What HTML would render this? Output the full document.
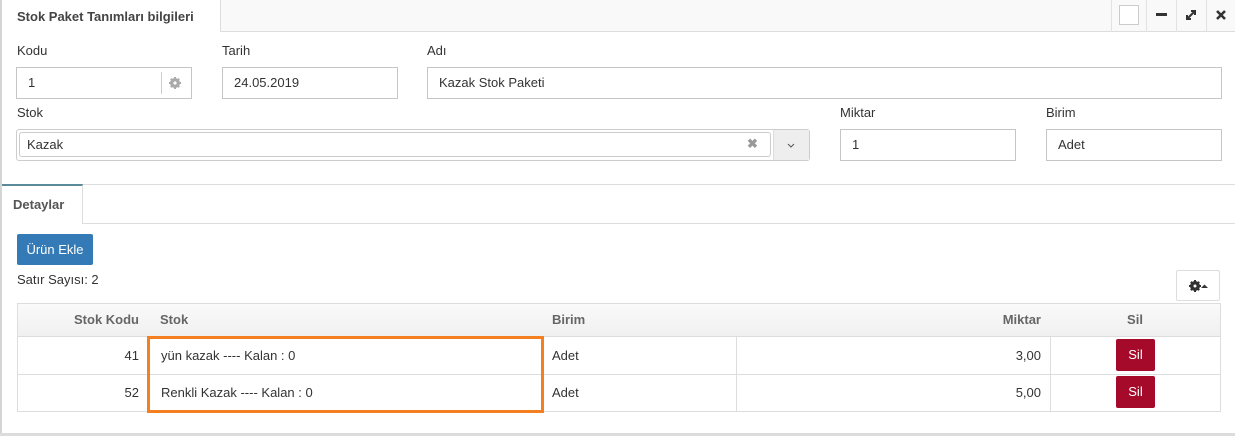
<!DOCTYPE html>
<html><head><meta charset="utf-8"><style>
*{box-sizing:border-box;margin:0;padding:0}
body{width:1235px;height:436px;overflow:hidden;background:#fff;font-family:"Liberation Sans",sans-serif;font-size:13px;color:#333;position:relative}
.a{position:absolute}
.inp{position:absolute;border:1px solid #c5c5c5;background:#fff;padding-left:11px;line-height:30px;height:32px;color:#333}
.lbl{position:absolute;font-size:13px;color:#333}
.th{position:absolute;font-weight:bold;color:#666;top:303px;line-height:34px}
.td{position:absolute;line-height:37px}
.sil{position:absolute;left:1116px;width:39px;height:32px;background:#a50a2a;color:#fff;border-radius:2px;text-align:center;line-height:32px}
</style></head><body>
<div class="a" style="left:0;top:0;width:2px;height:436px;background:#d5d5d5"></div>
<div class="a" style="left:0;top:433px;width:1235px;height:3px;background:#dcdcdc"></div>
<div class="a" style="left:220px;top:0;width:1015px;height:32px;background:#f9f9f9;border-left:1px solid #ddd;border-bottom:1px solid #ddd"></div>
<div class="a" style="left:17px;top:9px;font-weight:bold;color:#444">Stok Paket Tanımları bilgileri</div>
<div class="a" style="left:1111px;top:0;width:1px;height:32px;background:#e2e2e2"></div>
<div class="a" style="left:1146px;top:0;width:1px;height:32px;background:#e2e2e2"></div>
<div class="a" style="left:1176px;top:0;width:1px;height:32px;background:#e2e2e2"></div>
<div class="a" style="left:1206px;top:0;width:1px;height:32px;background:#e2e2e2"></div>
<div class="a" style="left:1119px;top:5px;width:20px;height:20px;border:1px solid #ccc;background:#fff"></div>
<div class="a" style="left:1156px;top:13px;width:11px;height:3px;background:#333"></div>
<svg class="a" style="left:1184px;top:8px" width="14" height="14" viewBox="0 0 14 14"><path d="M3 11L11 3M7 3h4v4M3 7v4h4" stroke="#333" stroke-width="2" fill="none"/></svg>
<svg class="a" style="left:1216px;top:10px" width="10" height="10" viewBox="0 0 10 10"><path d="M1 1L9 9M9 1L1 9" stroke="#333" stroke-width="2.6"/></svg>

<div class="lbl" style="left:17px;top:43px">Kodu</div>
<div class="lbl" style="left:222px;top:43px">Tarih</div>
<div class="lbl" style="left:427px;top:43px">Adı</div>
<div class="inp" style="left:16px;top:67px;width:176px">1</div>
<div class="a" style="left:161px;top:72px;width:1px;height:22px;background:#ccc"></div>
<svg class="a" style="left:169px;top:77px" width="12" height="12" viewBox="0 0 12 12"><circle cx="6" cy="6" r="3.5" fill="none" stroke="#aaa" stroke-width="3"/><path d="M6 0v12M0 6h12M1.8 1.8l8.4 8.4M10.2 1.8l-8.4 8.4" stroke="#aaa" stroke-width="2"/><circle cx="6" cy="6" r="1.6" fill="#fff"/></svg>
<div class="inp" style="left:222px;top:67px;width:176px">24.05.2019</div>
<div class="inp" style="left:427px;top:67px;width:795px">Kazak Stok Paketi</div>

<div class="lbl" style="left:17px;top:105px">Stok</div>
<div class="lbl" style="left:840px;top:105px">Miktar</div>
<div class="lbl" style="left:1046px;top:105px">Birim</div>
<div class="a" style="left:16px;top:129px;width:794px;height:32px;border:1px solid #ccc;border-radius:3px;background:#fff"></div>
<div class="a" style="left:19px;top:132px;width:752px;height:25px;border:1px solid #ccc;border-radius:3px;padding-left:7px;line-height:24px;color:#333">Kazak</div>
<div class="a" style="left:747px;top:136px;color:#999;font-weight:bold;font-size:13px">✖</div>
<div class="a" style="left:773px;top:130px;width:36px;height:30px;background:#eee;border-left:1px solid #ddd"></div>
<svg class="a" style="left:787px;top:143px" width="8" height="6"><path d="M1 1l3 3 3-3" stroke="#555" fill="none"/></svg>
<div class="inp" style="left:840px;top:129px;width:176px">1</div>
<div class="inp" style="left:1046px;top:129px;width:176px">Adet</div>

<div class="a" style="left:2px;top:184px;width:1233px;height:1px;background:#ddd"></div>
<div class="a" style="left:2px;top:223px;width:1233px;height:1px;background:#ddd"></div>
<div class="a" style="left:2px;top:184px;width:81px;height:40px;background:#fff;border-top:2px solid #5b8a9a;border-right:1px solid #ddd"></div>
<div class="a" style="left:13px;top:197px;font-weight:bold;color:#555">Detaylar</div>

<div class="a" style="left:17px;top:234px;width:76px;height:31px;background:#337ab7;border-radius:2px;color:#fff;text-align:center;line-height:31px">Ürün Ekle</div>
<div class="a" style="left:17px;top:272px">Satır Sayısı: 2</div>
<div class="a" style="left:1176px;top:270px;width:44px;height:31px;border:1px solid #ddd;border-radius:2px;background:#fff"></div>
<svg class="a" style="left:1189px;top:280px" width="12" height="12" viewBox="0 0 12 12"><circle cx="6" cy="6" r="3.5" fill="none" stroke="#333" stroke-width="3"/><path d="M6 0v12M0 6h12M1.8 1.8l8.4 8.4M10.2 1.8l-8.4 8.4" stroke="#333" stroke-width="2"/><circle cx="6" cy="6" r="1.5" fill="#fff"/></svg>
<svg class="a" style="left:1201px;top:284px" width="7" height="5"><path d="M0 4L3.5 0.5 7 4z" fill="#333"/></svg>

<div class="a" style="left:17px;top:303px;width:1204px;height:109px;border:1px solid #ddd"></div>
<div class="a" style="left:18px;top:304px;width:1202px;height:33px;background:linear-gradient(#fafafa,#f0f0f0);border-bottom:1px solid #ddd"></div>
<div class="a" style="left:18px;top:374px;width:1202px;height:1px;background:#ddd"></div>
<div class="a" style="left:736px;top:337px;width:1px;height:75px;background:#ddd"></div>
<div class="a" style="left:1050px;top:337px;width:1px;height:75px;background:#ddd"></div>
<div class="th" style="left:17px;width:122px;text-align:right">Stok Kodu</div>
<div class="th" style="left:160px">Stok</div>
<div class="th" style="left:552px">Birim</div>
<div class="th" style="left:736px;width:305px;text-align:right">Miktar</div>
<div class="th" style="left:1050px;width:170px;text-align:center">Sil</div>

<div class="td" style="left:17px;top:337px;width:122px;text-align:right">41</div>
<div class="td" style="left:161px;top:337px">yün kazak ---- Kalan : 0</div>
<div class="td" style="left:552px;top:337px">Adet</div>
<div class="td" style="left:736px;top:337px;width:305px;text-align:right">3,00</div>
<div class="sil" style="top:339px">Sil</div>
<div class="td" style="left:17px;top:374px;width:122px;text-align:right">52</div>
<div class="td" style="left:161px;top:374px">Renkli Kazak ---- Kalan : 0</div>
<div class="td" style="left:552px;top:374px">Adet</div>
<div class="td" style="left:736px;top:374px;width:305px;text-align:right">5,00</div>
<div class="sil" style="top:376px">Sil</div>

<div class="a" style="left:147px;top:336px;width:397px;height:77px;border:3px solid #f47f20"></div>
</body></html>
